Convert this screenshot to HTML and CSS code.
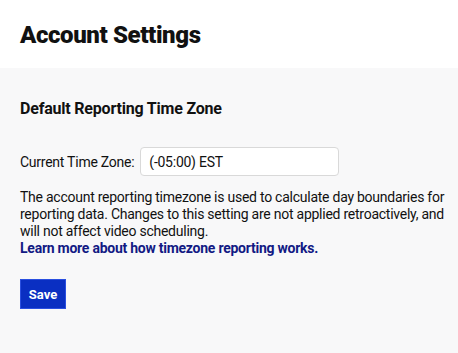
FILE: index.html
```html
<!DOCTYPE html>
<html lang="en">
<head>
    <meta charset="UTF-8">
    <meta name="viewport" content="width=device-width, initial-scale=1.0">
    <title>Account Settings</title>
    <link rel="stylesheet" href="styles.css">
</head>
<body>
    <header class="page-header">
        <h1>Account Settings</h1>
    </header>

    <section class="settings">
        <h2>Default Reporting Time Zone</h2>

        <div class="form-row">
            <label for="timezone">Current Time Zone:</label>
            <input type="text" id="timezone" value="(-05:00) EST" />
        </div>

        <p class="help">
            The account reporting timezone is used to calculate day boundaries for reporting data. Changes to this setting are not applied retroactively, and will not affect video scheduling.
            <a href="#">Learn more about how timezone reporting works.</a>
        </p>

        <button type="button" class="save">Save</button>
    </section>
</body>
</html>
```

FILE: styles.css
```css
html, body {
    height: 100%;
}
body {
    margin: 0;
    font-family: Roboto, "Liberation Sans", Arial, sans-serif;
    color: #111;
    background-color: #f8f8f9;
    display: flex;
    flex-direction: column;
}
.page-header {
    background: white;
    height: 68px;
    padding: 0 20px;
    box-sizing: border-box;
}
.page-header h1 {
    margin: 0;
    padding-top: 21px;
    font-size: 24px;
    line-height: 28px;
    font-weight: 900;
    letter-spacing: -0.4px;
}
.settings {
    flex: 1;
    padding: 30px 10px 0 20px;
}
.settings h2 {
    margin: 0 0 27px;
    font-size: 16px;
    line-height: 22px;
    font-weight: 700;
    letter-spacing: -0.2px;
}
.form-row {
    display: flex;
    align-items: center;
    gap: 6px;
}
label {
    font-size: 14px;
    letter-spacing: -0.25px;
}
input[type="text"] {
    width: 199px;
    height: 29px;
    padding: 0 8px;
    border: 1px solid #d9d9d9;
    border-radius: 4px;
    box-sizing: border-box;
    font-family: inherit;
    font-size: 14px;
    letter-spacing: -0.25px;
    color: #111;
    background: white;
}
.help {
    margin: 13px 0 0;
    font-size: 14px;
    line-height: 17px;
    letter-spacing: -0.25px;
}
.help a {
    display: block;
    color: #121a84;
    font-weight: 700;
    text-decoration: none;
}
.save {
    margin-top: 22px;
    width: 46px;
    height: 30px;
    padding: 0;
    background-color: #0a2fc2;
    color: white;
    border: 1px solid #2a4fe0;
    font-family: inherit;
    font-weight: 700;
    font-size: 13px;
    cursor: pointer;
}
```
